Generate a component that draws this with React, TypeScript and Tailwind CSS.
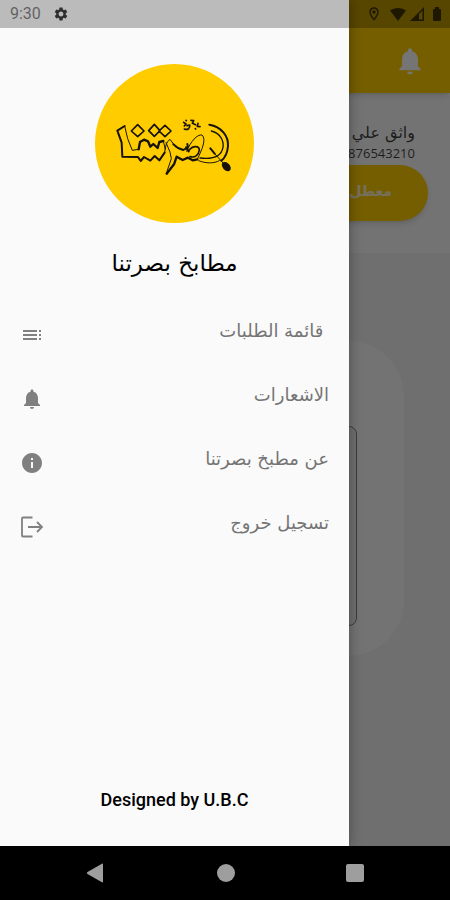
import { MdInfo, MdNotifications, MdOutlineLocationOn, MdSettings, MdToc } from 'react-icons/md';

const menuItems = [
  { label: '\u00a0قائمة الطلبات', icon: MdToc },
  { label: 'الاشعارات', icon: MdNotifications },
  { label: 'عن مطبخ بصرتنا', icon: MdInfo },
  { label: 'تسجيل خروج', icon: ExitIcon },
];

function ExitIcon({ className }: { className?: string }) {
  return (
    <svg viewBox="0 0 24 24" className={className} fill="none" stroke="currentColor" strokeWidth="1.8">
      <path d="M12.500 2.500H3a1 1 0 0 0-1 1v17a1 1 0 0 0 1 1h9.500" />
      <path d="M8 12h14M17 7l5 5-5 5" />
    </svg>
  );
}

/** Round brand mark with the hand-drawn wordmark and spoon */
function Logo() {
  return (
    <svg viewBox="15 12 477 477" className="size-[159px]" role="img" aria-label="بصرتنا">
      <circle cx="253.500" cy="250.500" r="238.500" fill="#ffcc00" />
      <g fill="none" stroke="#17130a" strokeLinejoin="round" strokeLinecap="round">
        <path strokeWidth="3" d="M104 198L113 236L127 271L146 268M220 243L226 268" />
        <path strokeWidth="6" d="M104 198L82 212L95 248L97 290L144 291L152 303L162 291L181 302L194 288L208 301L224 278" />
        <path strokeWidth="7" d="M146 268L150 246L162 239L174 244L181 260L190 252L203 264L208 246L220 243" />
        <path strokeWidth="5" d="M124 213l19-19l19 19l-19 17zM176 212l17-19l17 19l-17 17zM207 213l18-17l18 17l-18 17z" />
        {/* middle descender */}
        <path strokeWidth="3" d="M224 278C226 262 228 246 240 238L258 262M228 248L240 276L244 296L229 340" />
        <path strokeWidth="7" d="M230 341L252 313L260 290L278 300L294 293L308 301L322 298" />
        <path strokeWidth="6" d="M250 253L264 264L280 270L294 262L292 252M288 262L296 274" />
        {/* tall loop and its counter */}
        <path strokeWidth="3" d="M290 274C302 244 322 222 336 225C350 238 336 268 322 298" />
        <path strokeWidth="5" d="M296 272C310 254 328 258 328 270C326 286 314 294 300 290" />
        {/* plate and spoon */}
        <path strokeWidth="6" d="M358 194C394 200 416 228 414 258C412 282 402 296 394 302" />
        <path strokeWidth="4" d="M364 213C390 220 402 240 399 262C394 288 372 299 330 294" />
        <path strokeWidth="3" d="M388 302C372 311 348 311 326 302" />
        <path strokeWidth="6" d="M361 265L374 281" />
        <path strokeWidth="3" d="M374 281L402 312" />
        <path strokeWidth="5" d="M281 187l7 5l-5 6M283 207c10 4 18-2 16-12l-8 2M303 181l8 1l-4 8l10 4M324 190l-2 9l8 1M288 181l1 1M316 206l1 1" />
      </g>
      <path fill="#17130a" d="M397 309C404 302 418 308 422 322C424 334 414 337 405 331C398 325 393 316 397 309Z" />
    </svg>
  );
}

function StatusBar() {
  return (
    <div className="absolute inset-x-0 top-0 flex h-7 items-center bg-black/25 pr-2 pl-[10px] font-[Roboto,sans-serif] text-black/50">
      <span className="text-base">9:30</span>
      <MdSettings className="ml-3 size-4 text-black/75" />
      <div className="ml-auto flex items-center gap-1 text-black/65">
        <MdOutlineLocationOn className="mr-1 size-4" />
        <svg viewBox="0 0 16 14" className="h-4 w-4" fill="currentColor" aria-hidden="true">
          <path d="M0 3.500C4.500 0 11.500 0 16 3.500L8 14Z" />
        </svg>
        <svg viewBox="0 0 14 14" className="size-[14px]" fill="currentColor" aria-hidden="true">
          <path fillRule="evenodd" d="M14 0V14H0ZM12.500 3.500L9 7V12.500H12.500Z" />
        </svg>
        <svg viewBox="0 0 10 16" className="ml-1 h-4 w-[10px]" fill="currentColor" aria-hidden="true">
          <path d="M3 1H7V3H8Q9 3 9 4V14Q9 15 8 15H2Q1 15 1 14V4Q1 3 2 3H3Z" />
        </svg>
      </div>
    </div>
  );
}

function Drawer() {
  return (
    <aside
      dir="rtl"
      className="absolute inset-y-0 left-0 flex w-[349px] max-w-[85%] flex-col items-center bg-[#fafafa] pt-16 shadow-[0_0_12px_rgba(0,0,0,0.35)]"
    >
      <Logo />
      <h1 className="mt-6 text-[23px] leading-8 text-black">مطابخ بصرتنا</h1>
      <nav className="mt-6 w-full">
        {menuItems.map(({ label, icon: Icon }) => (
          <a key={label} href="#" className="flex h-16 items-center justify-between px-5 text-[#757575]">
            <span className="pb-2 text-lg leading-6">{label}</span>
            <Icon className="size-6 text-[#808080]" />
          </a>
        ))}
      </nav>
      <p dir="ltr" className="mt-auto mb-8 font-[Roboto,sans-serif] text-lg font-medium text-black">
        Designed by U.B.C
      </p>
    </aside>
  );
}

export default function App() {
  return (
    <div className="flex min-h-screen flex-col bg-black font-['DejaVu_Sans',sans-serif]">
      <div className="relative flex flex-1 flex-col overflow-hidden bg-[#f2f2f2]">
        {/* Screen behind the drawer */}
        <header className="relative flex h-[93px] items-end justify-end bg-[#ffcc00] px-6 pb-4 shadow-md">
          <button aria-label="الاشعارات" className="text-white">
            <MdNotifications className="size-8" />
          </button>
        </header>
        <main>
          <section className="flex h-40 flex-col items-end bg-[#fafafa] pt-7 text-black/75">
            <p dir="rtl" className="mr-[35px] text-base leading-6">واثق علي</p>
            <p className="mr-[35px] font-['Open_Sans',sans-serif] text-[13px] leading-4">9876543210</p>
            <button
              dir="rtl"
              className="mt-1 mr-[22px] h-14 w-32 rounded-full bg-[#ffcc00] pr-9 pb-1 text-right text-sm font-bold text-white/80 shadow-md"
            >
              معطل
            </button>
          </section>
          <section className="mx-[46px] mt-[88px] rounded-[56px] bg-[#fafafa] px-[47px] pt-[85px] pb-[30px]">
            <div className="h-[200px] rounded-lg border border-[#808080] bg-[#f2f2f2]" />
          </section>
        </main>

        <div className="absolute inset-0 bg-black/54" />
        <Drawer />
        <StatusBar />
      </div>

      {/* System navigation */}
      <footer className="flex h-[54px] items-center justify-around bg-black px-[30px] text-[#9e9e9e]">
        <button aria-label="Back">
          <svg viewBox="0 0 20 20" className="size-5" fill="currentColor">
            <path d="M17 1.500V18.500Q17 20 15.500 19L1.500 11Q0 10 1.500 9L15.500 1Q17 0 17 1.500Z" />
          </svg>
        </button>
        <button aria-label="Home" className="size-[18px] rounded-full bg-[#9e9e9e]" />
        <button aria-label="Recent apps" className="size-[18px] rounded-xs bg-[#9e9e9e]" />
      </footer>
    </div>
  );
}
